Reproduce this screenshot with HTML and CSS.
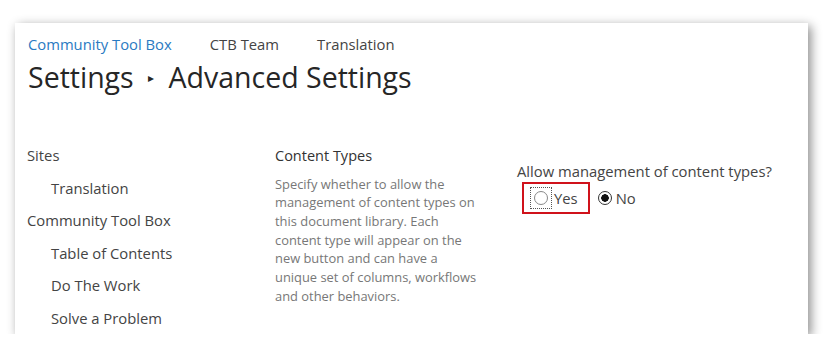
FILE: index.html
```html
<!DOCTYPE html>
<html lang="en">
<head>
    <meta charset="UTF-8">
    <title>Advanced Settings</title>
    <link rel="stylesheet" href="styles.css">
</head>
<body>

<div class="frame">
    <div class="top">
        <ul class="crumbs">
            <li class="site">Community Tool Box</li>
            <li>CTB Team</li>
            <li>Translation</li>
        </ul>
        <h1 class="title">Settings <span class="arrow">&#9656;</span> Advanced Settings</h1>
    </div>

    <div class="main">
        <ul class="quick">
            <li>Sites</li>
            <li class="sub">Translation</li>
            <li>Community Tool Box</li>
            <li class="sub">Table of Contents</li>
            <li class="sub">Do The Work</li>
            <li class="sub">Solve a Problem</li>
        </ul>

        <div class="section">
            <h3>Content Types</h3>
            <p>Specify whether to allow the<br>
               management of content types on<br>
               this document library. Each<br>
               content type will appear on the<br>
               new button and can have a<br>
               unique set of columns, workflows<br>
               and other behaviors.</p>
        </div>

        <div class="field">
            <div class="question">Allow management of content types?</div>
            <div class="choices">
                <label class="choice marked">
                    <span class="focus"><span class="radio"></span></span>Yes
                </label>
                <label class="choice">
                    <span class="radio on"></span>No
                </label>
            </div>
        </div>
    </div>
</div>

</body>
</html>
```

FILE: styles.css
```css
*{
    margin:0;
    padding:0;
}
li{
    list-style-type: none;
}
body{
    background: #fff;
    font-family: "Open Sans", "Noto Sans", sans-serif;
    color: #444;
}
.frame{
    width: 793px;
    height: 311px;
    margin: 23px 0 0 15px;
    background: #fff;
    box-shadow: 3px 3px 10px rgba(0,0,0,0.45);
    overflow: hidden;
}
.top{
    padding: 11px 0 0 13px;
}
.crumbs{
    display: flex;
    gap: 38px;
    font-size: 14.8px;
    line-height: 20px;
    color: #444;
}
.crumbs .site{
    color: #2a7ac2;
}
.title{
    margin-top: 5px;
    font-weight: normal;
    font-size: 28.5px;
    line-height: 36px;
    color: #262626;
}
.title .arrow{
    font-size: 12px;
    vertical-align: 6px;
    margin: 0 7px 0 7px;
}
.main{
    display: grid;
    grid-template-columns: 248px 242px 1fr;
    padding: 49px 0 0 12px;
}
.quick li{
    font-size: 14.8px;
    line-height: 20px;
    margin-bottom: 12.6px;
}
.quick li.sub{
    padding-left: 24px;
}
.section{
    padding-top: 1px;
}
.section h3{
    font-weight: normal;
    font-size: 14.5px;
    line-height: 20px;
    color: #333;
}
.section p{
    margin-top: 8.6px;
    font-size: 12.9px;
    line-height: 18.7px;
    color: #777;
    white-space: nowrap;
}
.field{
    padding-top: 16px;
}
.question{
    font-size: 14.8px;
    line-height: 20px;
    color: #444;
}
.choices{
    display: flex;
    align-items: center;
    gap: 8px;
    margin-top: 1px;
    font-size: 14.8px;
}
.choice{
    display: flex;
    align-items: center;
    height: 28px;
}
.choice.marked{
    border: 2px solid #d0121b;
    padding: 0 10px 0 6px;
    margin-left: 5px;
}
.focus{
    display: flex;
    align-items: center;
    justify-content: center;
    width: 20px;
    height: 20px;
    border: 1px dotted #555;
    margin-right: 2px;
}
.radio{
    display: block;
    width: 14px;
    height: 14px;
    border: 1px solid #888;
    border-radius: 50%;
    box-sizing: border-box;
    margin-right: 4px;
}
.focus .radio{
    margin-right: 0;
}
.radio.on{
    border-color: #333;
    background: radial-gradient(circle, #111 0 3.5px, #fff 4px);
}
```
